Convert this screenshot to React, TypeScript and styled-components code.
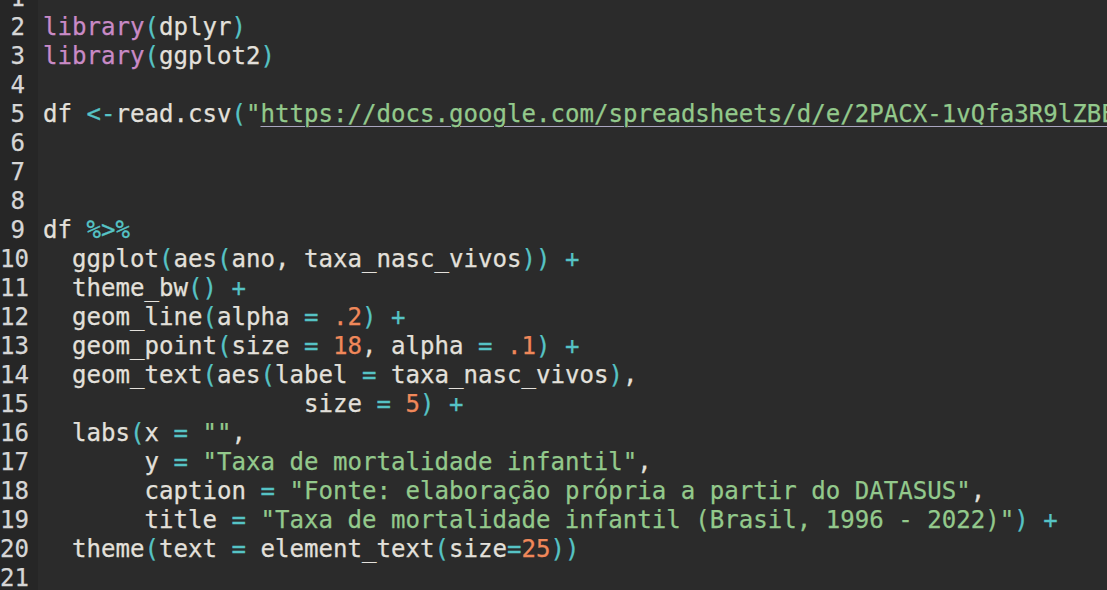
import React from "react";
import styled, { createGlobalStyle, css } from "styled-components";

const GlobalStyle = createGlobalStyle`
  html, body {
    margin: 0;
    padding: 0;
    background: #2b2b2b;
    overflow: hidden;
  }
  #root {
    width: 1107px;
    height: 590px;
    overflow: hidden;
  }
`;

type Kind = "kw" | "op" | "id" | "str" | "num" | "url";

const colors: Record<Kind, string> = {
  kw: "#c98ac6",
  op: "#56c3c5",
  id: "#e3e0db",
  str: "#93c98c",
  num: "#f0885a",
  url: "#93c98c",
};

const Editor = styled.div`
  display: flex;
  flex-direction: column;
  margin-top: -16.5px;
  width: 1107px;
  font-family: "DejaVu Sans Mono", "Liberation Mono", monospace;
  font-size: 24.08px;
  line-height: 29px;
  background: #2b2b2b;
  -webkit-text-stroke: 0.25px currentColor;
`;

const Row = styled.div`
  display: grid;
  grid-template-columns: 38px 1fr;
  height: 29px;
`;

const LineNo = styled.div`
  background: #262626;
  color: #d6d6d6;
  text-align: right;
  padding-right: 13px;
  white-space: pre;
  overflow: hidden;
`;

const Code = styled.div`
  padding-left: 5px;
  white-space: pre;
  overflow: hidden;
  color: #e3e0db;
`;

const Tok = styled.span<{ $k: Kind }>`
  color: ${(p) => colors[p.$k]};
  ${(p) =>
    p.$k === "url" &&
    css`
      text-decoration: underline;
      text-decoration-color: #aaa6c0;
      text-decoration-thickness: 1px;
      text-underline-offset: 4px;
    `}
`;

type T = [Kind, string];

const k = (s: string): T => ["kw", s];
const o = (s: string): T => ["op", s];
const i = (s: string): T => ["id", s];
const s = (x: string): T => ["str", x];
const n = (x: string): T => ["num", x];
const u = (x: string): T => ["url", x];

const lines: T[][] = [
  [],
  [k("library"), o("("), i("dplyr"), o(")")],
  [k("library"), o("("), i("ggplot2"), o(")")],
  [],
  [
    i("df "),
    o("<-"),
    i("read.csv"),
    o("("),
    s('"'),
    u("https://docs.google.com/spreadsheets/d/e/2PACX-1vQfa3R9lZBEqkX8tLm0pub?output=csv"),
    s('"'),
    o(")"),
  ],
  [],
  [],
  [],
  [i("df "), o("%>%")],
  [i("  ggplot"), o("("), i("aes"), o("("), i("ano, taxa_nasc_vivos"), o("))"), i(" "), o("+")],
  [i("  theme_bw"), o("()"), i(" "), o("+")],
  [i("  geom_line"), o("("), i("alpha "), o("="), i(" "), n(".2"), o(")"), i(" "), o("+")],
  [
    i("  geom_point"),
    o("("),
    i("size "),
    o("="),
    i(" "),
    n("18"),
    i(", alpha "),
    o("="),
    i(" "),
    n(".1"),
    o(")"),
    i(" "),
    o("+"),
  ],
  [i("  geom_text"), o("("), i("aes"), o("("), i("label "), o("="), i(" taxa_nasc_vivos"), o(")"), i(",")],
  [i("                  size "), o("="), i(" "), n("5"), o(")"), i(" "), o("+")],
  [i("  labs"), o("("), i("x "), o("="), i(" "), s('""'), i(",")],
  [i("       y "), o("="), i(" "), s('"Taxa de mortalidade infantil"'), i(",")],
  [
    i("       caption "),
    o("="),
    i(" "),
    s('"Fonte: elaboração própria a partir do DATASUS"'),
    i(","),
  ],
  [
    i("       title "),
    o("="),
    i(" "),
    s('"Taxa de mortalidade infantil (Brasil, 1996 - 2022)"'),
    o(")"),
    i(" "),
    o("+"),
  ],
  [
    i("  theme"),
    o("("),
    i("text "),
    o("="),
    i(" element_text"),
    o("("),
    i("size"),
    o("="),
    n("25"),
    o("))"),
  ],
  [],
];

export default function App() {
  return (
    <>
      <GlobalStyle />
      <Editor>
        {lines.map((toks, idx) => (
          <Row key={idx}>
            <LineNo>{idx + 1}</LineNo>
            <Code>
              {toks.length === 0
                ? " "
                : toks.map(([kind, text], j) => (
                    <Tok key={j} $k={kind}>
                      {text}
                    </Tok>
                  ))}
            </Code>
          </Row>
        ))}
      </Editor>
    </>
  );
}
